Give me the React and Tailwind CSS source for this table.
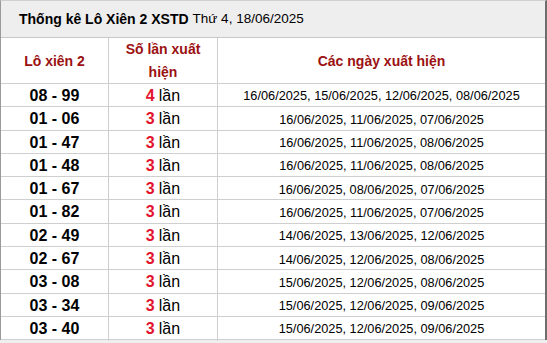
const rows = [
  { pair: '08 - 99', count: 4, dates: '16/06/2025, 15/06/2025, 12/06/2025, 08/06/2025' },
  { pair: '01 - 06', count: 3, dates: '16/06/2025, 11/06/2025, 07/06/2025' },
  { pair: '01 - 47', count: 3, dates: '16/06/2025, 11/06/2025, 08/06/2025' },
  { pair: '01 - 48', count: 3, dates: '16/06/2025, 11/06/2025, 08/06/2025' },
  { pair: '01 - 67', count: 3, dates: '16/06/2025, 08/06/2025, 07/06/2025' },
  { pair: '01 - 82', count: 3, dates: '16/06/2025, 11/06/2025, 07/06/2025' },
  { pair: '02 - 49', count: 3, dates: '14/06/2025, 13/06/2025, 12/06/2025' },
  { pair: '02 - 67', count: 3, dates: '14/06/2025, 12/06/2025, 08/06/2025' },
  { pair: '03 - 08', count: 3, dates: '15/06/2025, 12/06/2025, 08/06/2025' },
  { pair: '03 - 34', count: 3, dates: '15/06/2025, 12/06/2025, 09/06/2025' },
  { pair: '03 - 40', count: 3, dates: '15/06/2025, 12/06/2025, 09/06/2025' },
];

export default function App() {
  return (
    <div className="w-[547px] h-[343px] bg-[#efefef] overflow-hidden font-['Liberation_Sans',Arial,sans-serif]">
      <div className="w-[547px] bg-white border-l border-l-[#9a9a9a] border-r-2 border-r-[#6e6e6e] border-t border-t-[#cfcfcf]">
        {/* Title */}
        <div className="h-[37px] bg-[#efeeee] border-b border-[#c8c8c8] flex items-center pl-[18px] text-[14px] text-black">
          <span className="font-bold">Thống kê Lô Xiên 2 XSTD</span>
          <span className="ml-[4px] text-[13.5px]">Thứ 4, 18/06/2025</span>
        </div>

        {/* Header */}
        <div className="grid grid-cols-[108px_109px_1fr] h-[46px] border-b border-[#cfcfcf] text-[14px] font-bold text-[#9b1111]">
          <div className="flex items-center justify-center border-r border-[#cfcfcf]">Lô xiên 2</div>
          <div className="flex items-center justify-center text-center leading-[23px] border-r border-[#cfcfcf] px-2">
            Số lần xuất hiện
          </div>
          <div className="flex items-center justify-center">Các ngày xuất hiện</div>
        </div>

        {/* Rows */}
        {rows.map((r) => (
          <div
            key={r.pair}
            className="grid grid-cols-[108px_109px_1fr] h-[23.3px] border-b border-[#cfcfcf] text-black"
          >
            <div className="flex items-center justify-center border-r border-[#cfcfcf] text-[16px] font-bold">
              {r.pair}
            </div>
            <div className="flex items-center justify-center border-r border-[#cfcfcf] text-[16px]">
              <span className="font-bold text-[#e3132f]">{r.count}</span>
              <span className="ml-[4px]">lần</span>
            </div>
            <div className="flex items-center justify-center text-[12.75px]">{r.dates}</div>
          </div>
        ))}
      </div>
    </div>
  );
}
